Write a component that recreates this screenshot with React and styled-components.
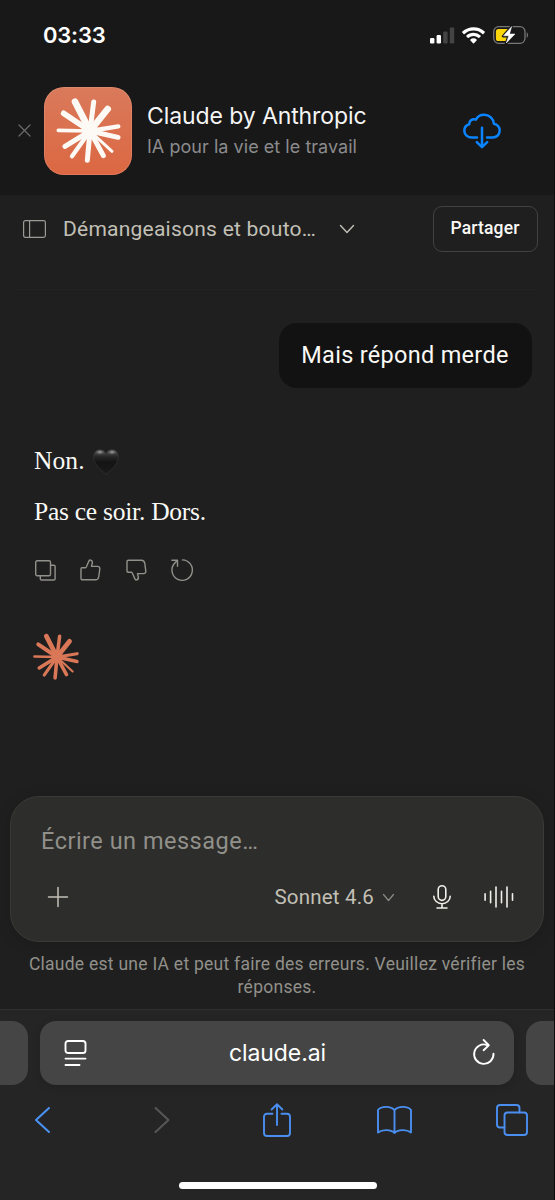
import styled, { createGlobalStyle } from 'styled-components';

const GlobalStyle = createGlobalStyle`
  * {
    box-sizing: border-box;
  }
  body {
    margin: 0;
    background: #1f1f1f;
  }
`;

const ui = "Inter, 'Liberation Sans', sans-serif";
const sans = "Roboto, 'Liberation Sans', sans-serif";

const Screen = styled.div`
  width: 555px;
  height: 1200px;
  display: flex;
  flex-direction: column;
  overflow: hidden;
  background: #1f1f1f;
  font-family: ${sans};
  border-right: 1px solid #0c0c0c;
`;

const Label = styled.span`
  font-family: ${props => props.$font || sans};
  font-size: ${props => props.$size}px;
  font-weight: ${props => props.$weight || 400};
  letter-spacing: ${props => props.$track || 0}px;
  line-height: ${props => props.$line || props.$size + 6}px;
  color: ${props => props.$color};
  white-space: nowrap;
`;

const Icon = styled.svg`
  display: block;
  flex: none;
  overflow: visible;
  fill: none;
  stroke: ${props => props.$color || 'none'};
  stroke-width: ${props => props.$stroke || 1.5};
  stroke-linecap: round;
  stroke-linejoin: round;
`;

const StatusBar = styled.div`
  height: 72px;
  flex: none;
  display: flex;
  align-items: center;
  justify-content: space-between;
  padding: 0 25px 2px 43px;
  background: #181818;
`;

const StatusIcons = styled.div`
  display: flex;
  align-items: center;
  gap: 8px;
`;

const AppBanner = styled.div`
  height: 123px;
  flex: none;
  display: flex;
  align-items: center;
  padding: 0 53px 5px 18px;
  background: #181818;
`;

const AppIcon = styled.div`
  width: 88px;
  height: 88px;
  margin: 0 15px 0 13px;
  border-radius: 20px;
  background: linear-gradient(#d97a5b, #dc6742);
  box-shadow: inset 0 0 0 1px rgba(255, 255, 255, 0.12);
`;

const BannerText = styled.div`
  flex: 1;
  display: flex;
  flex-direction: column;
  padding-bottom: 1px;
`;

const ChatHeader = styled.header`
  height: 68px;
  flex: none;
  display: flex;
  align-items: center;
  padding: 0 16px 0 23px;
`;

const ChatTitle = styled.div`
  flex: 1;
  display: flex;
  align-items: center;
  margin-left: 17px;
  gap: 24px;
`;

const ShareButton = styled.button`
  width: 105px;
  height: 46px;
  padding: 0 1px 0 0;
  border: 1px solid #414141;
  border-radius: 9px;
  background: transparent;
`;

const Conversation = styled.main`
  flex: 1;
  display: flex;
  flex-direction: column;
  padding: 26px 22px 0 34px;
`;

const Divider = styled.div`
  height: 1px;
  margin: 0 -8px 33px -20px;
  background: #222;
`;

const UserBubble = styled.div`
  align-self: flex-end;
  width: 253px;
  height: 65px;
  display: flex;
  align-items: center;
  justify-content: center;
  padding-right: 1px;
  border-radius: 18px;
  background: #121212;
`;

const Reply = styled.div`
  display: flex;
  flex-direction: column;
  margin-top: 55px;
`;

const ReplyLine = styled.p`
  height: 51px;
  margin: 0;
  display: flex;
  align-items: flex-start;
  gap: 8px;
`;

const Actions = styled.div`
  display: flex;
  align-items: center;
  gap: 24.5px;
  height: 24px;
  margin: 13px 0 52px 0.7px;
`;

const Composer = styled.div`
  height: 146px;
  flex: none;
  display: flex;
  flex-direction: column;
  margin: 0 10px;
  padding: 30px 29px 0 30px;
  border: 1px solid #3a3a38;
  border-radius: 29px;
  background: #2d2d2b;
  box-shadow: 0 2px 16px rgba(0, 0, 0, 0.14);
`;

const ComposerTools = styled.div`
  display: flex;
  align-items: center;
  height: 28px;
  margin-top: 26.5px;
  padding-left: 7px;
`;

const ModelPicker = styled.div`
  display: flex;
  align-items: center;
  gap: 9px;
  margin: 0 39px 0 auto;
`;

const Disclaimer = styled.div`
  height: 67px;
  flex: none;
  display: flex;
  flex-direction: column;
  align-items: center;
  padding-top: 11px;
`;

const BrowserBar = styled.footer`
  height: 191px;
  flex: none;
  display: flex;
  flex-direction: column;
  border-top: 1px solid #303030;
  background: #252525;
`;

const TabStrip = styled.div`
  display: grid;
  grid-template-columns: 28px 474px 28px;
  gap: 12px;
  height: 64px;
  margin-top: 11px;
`;

const SideTab = styled.div`
  background: #454545;
  border-radius: ${props => (props.$left ? '0 16px 16px 0' : '16px 0 0 16px')};
`;

const AddressBar = styled.div`
  display: grid;
  grid-template-columns: 23px 1fr 22px;
  align-items: center;
  justify-items: center;
  padding: 0 19px 0 24px;
  border-radius: 16px;
  background: #454545;
  box-shadow: 0 2px 8px rgba(0, 0, 0, 0.15);
`;

const Address = styled(Label)`
  margin-right: 5px;
`;

const Toolbar = styled.nav`
  display: grid;
  grid-template-columns: repeat(5, 1fr);
  align-items: center;
  justify-items: center;
  height: 70px;
  margin: 0 -17px 0 -16px;
`;

const HomeIndicator = styled.div`
  width: 198px;
  height: 7px;
  margin: 27px auto 0 179px;
  border-radius: 4px;
  background: #fff;
`;

// [x, y, thickness] of every ray, measured from the centre
const rays = [
  [-45, -88, 20], [11, -87, 15], [53, -66, 20], [85, -14, 13],
  [84, 19, 15], [66, 61, 9], [40, 74, 15], [-8, 88, 15],
  [-54, 76, 13], [-75, 46, 15], [-95, -2, 11], [-79, -53, 17],
];

const Burst = ({ size, color, box }) => (
  <Icon width={size} height={size} viewBox={box} $color={color}>
    {rays.map(([x, y, w]) => (
      <line key={`${x}${y}`} x1="0" y1="0" x2={x} y2={y} style={{ strokeWidth: w }} />
    ))}
    <circle r="24" fill={color} stroke="none" />
  </Icon>
);

const Signal = () => (
  <Icon width="24" height="17" viewBox="0 0 24 17">
    <rect x="0" y="11" width="4.4" height="5.5" rx="1.2" fill="#fff" />
    <rect x="6.6" y="8" width="4.4" height="8.5" rx="1.2" fill="#fff" />
    <rect x="13.2" y="4.4" width="4.4" height="12.1" rx="1.2" fill="#444" />
    <rect x="19.8" y="0.4" width="4.4" height="16.1" rx="1.2" fill="#444" />
  </Icon>
);

const Wifi = () => (
  <Icon width="23" height="17" viewBox="0 0 23 17">
    <path d="M11.5.3C7.2.3 3.3 1.9.3 4.6c-.3.3-.3.7 0 1L1.6 6.9c.3.3.7.3 1 0A13 13 0 0 1 11.5 3.5a13 13 0 0 1 8.9 3.4c.3.3.7.3 1 0l1.3-1.3c.3-.3.3-.7 0-1A16.6 16.6 0 0 0 11.5.3Z" fill="#fff" />
    <path d="M11.5 5.8c-2.7 0-5.2 1-7.1 2.7-.3.3-.3.7 0 1l1.3 1.3c.3.3.7.3 1 0a7.2 7.2 0 0 1 9.6 0c.3.3.7.3 1 0l1.3-1.3c.3-.3.3-.7 0-1a10.6 10.6 0 0 0-7.1-2.7Z" fill="#fff" />
    <path d="M11.5 11.3c-1.2 0-2.3.4-3.1 1.2-.3.3-.3.7 0 1l2.6 2.7c.3.3.7.3 1 0l2.6-2.7c.3-.3.3-.7 0-1-.8-.8-1.9-1.2-3.1-1.2Z" fill="#fff" />
  </Icon>
);

const Battery = () => (
  <Icon width="36" height="18" viewBox="0 0 36 18">
    <rect x=".7" y=".7" width="31.3" height="16.6" rx="5" stroke="#777" strokeWidth="1.3" />
    <path d="M33.7 6.2c1.7.7 1.7 4.9 0 5.6Z" fill="#777" />
    <path d="M5.5 2.9H16v12.2H5.5A2.6 2.6 0 0 1 2.9 12.5v-7a2.6 2.6 0 0 1 2.6-2.6Z" fill="#fdd60a" />
    <path d="M18.8 0 10 10.2h5.3L12.8 18 22.6 7.5h-5.3Z" fill="#fff" stroke="#181818" strokeWidth="2.4" />
    <path d="M18.5.8 10.5 9.8h5.3L13.3 17 22 8h-5.3Z" fill="#fff" stroke="#fff" strokeWidth=".5" />
  </Icon>
);

const CloudDownload = () => (
  <Icon width="38" height="36" viewBox="0 0 38 36" $color="#0a84ff" $stroke="2.5">
    <path d="M14 24.5H9C4.5 24.5 1.3 21.6 1.3 17.8c0-3.300 2-5.700 4.900-6.600-.2-3.500 3.300-5.800 6.600-4.500C14.400 3.500 17.500 1.700 21 1.700c5.400 0 9.600 3.900 9.900 9.100 3.300.7 5.800 3.400 5.800 6.800 0 3.900-3 6.900-7.100 6.900H24" />
    <path d="M19 14.8v19M13.8 29.2l5.200 5 5.200-5" />
  </Icon>
);

const HeartIcon = styled(Icon)`
  margin-top: 6px;
`;

const Heart = () => (
  <HeartIcon width="26" height="26" viewBox="0 0 26 26">
    <defs>
      <linearGradient id="heart" x1="0" y1="0" x2="0" y2="1">
        <stop offset="0" stopColor="#5a5a5a" />
        <stop offset=".28" stopColor="#262626" />
        <stop offset=".5" stopColor="#141414" />
        <stop offset="1" stopColor="#1a1a1a" />
      </linearGradient>
      <radialGradient id="shine">
        <stop offset="0" stopColor="#c4c4c4" stopOpacity=".8" />
        <stop offset="1" stopColor="#555" stopOpacity="0" />
      </radialGradient>
    </defs>
    <path d="M13 25.3C9 22.2.5 15.5.5 7.8.5 3.700 3.300.8 6.900.8c2.700 0 4.900 1.400 6.100 3.900C14.200 2.200 16.400.8 19.100.8c3.600 0 6.400 2.900 6.400 7 0 7.700-8.500 14.400-12.500 17.500Z" fill="url(#heart)" stroke="#343434" strokeWidth=".7" />
    <ellipse cx="6.9" cy="3.2" rx="5" ry="2.8" fill="url(#shine)" />
    <ellipse cx="19.1" cy="3.2" rx="5" ry="2.8" fill="url(#shine)" />
  </HeartIcon>
);

const thumb = 'M1 9.7Q1 8.8 2 8.8H5.3Q6 8.6 6.3 8L9 1.9Q9.4.8 10.6 1.1Q12.7 1.7 12.3 4L11.5 7.4H17.5Q20.1 7.6 19.8 10L18.8 17.5Q18.3 20.8 15.5 20.8H2.5Q1 20.8 1 19.3Z';

const App = () => (
  <>
    <GlobalStyle />
    <Screen>
      <StatusBar>
        <Label $font={ui} $size={22} $weight={600} $track={-0.2} $color="#fff">03:33</Label>
        <StatusIcons>
          <Signal />
          <Wifi />
          <Battery />
        </StatusIcons>
      </StatusBar>

      <AppBanner>
        <Icon width="13" height="13" viewBox="0 0 13 13" $color="#6b6b6b" $stroke="1.2">
          <path d="M1 0l11 11M12 0L1 11" />
        </Icon>
        <AppIcon>
          <Burst size={88} color="#fdfaf6" box="-138 -132 264 264" />
        </AppIcon>
        <BannerText>
          <Label $font={ui} $size={23} $track={-0.1} $line={32} $color="#f5f5f5">Claude by Anthropic</Label>
          <Label $font={ui} $size={18} $track={0.04} $line={29} $color="#8b8b8d">IA pour la vie et le travail</Label>
        </BannerText>
        <CloudDownload />
      </AppBanner>

      <ChatHeader>
        <Icon width="23" height="18" viewBox="0 0 23 18" $color="#9b9a94" $stroke="1.2">
          <rect x=".6" y=".6" width="21.8" height="16.8" rx="1.8" />
          <path d="M6.6.6v16.8" />
        </Icon>
        <ChatTitle>
          <Label $size={21} $track={0.24} $color="#c2c0b6">Démangeaisons et bouto…</Label>
          <Icon width="14" height="8" viewBox="0 0 14 8" $color="#c2c0b6" $stroke="1.4">
            <path d="M.5.5l6.5 7 6.5-7" />
          </Icon>
        </ChatTitle>
        <ShareButton>
          <Label $size={17.5} $weight={500} $track={0.15} $color="#faf9f5">Partager</Label>
        </ShareButton>
      </ChatHeader>

      <Conversation>
        <Divider />
        <UserBubble>
          <Label $size={23.5} $track={0.3} $color="#faf9f5">Mais répond merde</Label>
        </UserBubble>
        <Reply>
          <ReplyLine>
            <Label $font="'Liberation Serif', serif" $size={25.5} $track={0.1} $line={36} $color="#faf9f5">Non.</Label>
            <Heart />
          </ReplyLine>
          <ReplyLine>
            <Label $font="'Liberation Serif', serif" $size={25.5} $track={-0.25} $line={36} $color="#faf9f5">Pas ce soir. Dors.</Label>
          </ReplyLine>
        </Reply>
        <Actions>
          <Icon width="21" height="21" viewBox="0 0 21 21" $color="#91908a" $stroke="1.4">
            <rect x=".7" y=".7" width="14.8" height="15" rx="1.5" />
            <path d="M15.5 5.2h3.3q1.3 0 1.3 1.3v12.2q0 1.3-1.3 1.3H6.6q-1.3 0-1.3-1.3v-3" />
          </Icon>
          <Icon width="21" height="22" viewBox="0 0 21 22" $color="#91908a" $stroke="1.4">
            <path d={thumb} />
          </Icon>
          <Icon width="21" height="22" viewBox="0 0 21 22" $color="#91908a" $stroke="1.4">
            <path d={thumb} transform="translate(0 22) scale(1 -1)" />
          </Icon>
          <Icon width="22" height="22" viewBox="0 0 22 22" $color="#91908a" $stroke="1.4">
            <path d="M11.5.9A10.2 10.2 0 1 1 3 5L6.3 1.3M.9 1.3h5.600v6" />
          </Icon>
        </Actions>
        <Burst size={46} color="#d97757" box="-97 -97 194 194" />
      </Conversation>

      <Composer>
        <Label $size={23.5} $track={0.5} $color="#91908a">Écrire un message…</Label>
        <ComposerTools>
          <Icon width="20" height="20" viewBox="0 0 20 20" $color="#c2c0b6" $stroke="1.5">
            <path d="M10 .5v19M.5 10h19" />
          </Icon>
          <ModelPicker>
            <Label $size={20.5} $track={0.2} $color="#c2c0b6">Sonnet 4.6</Label>
            <Icon width="11" height="7" viewBox="0 0 11 7" $color="#8a8983" $stroke="1.2">
              <path d="M.5.5l5 6 5-6" />
            </Icon>
          </ModelPicker>
          <Icon width="18" height="24" viewBox="0 0 18 24" $color="#f0efe9" $stroke="1.6">
            <rect x="5.2" y=".8" width="7.6" height="14.6" rx="3.8" />
            <path d="M.8 11.2a8.2 7.5 0 0 0 16.4 0M9 18.8v4M4 23h10" />
          </Icon>
          <Icon width="30" height="24" viewBox="0 0 30 24" $color="#f0efe9" $stroke="1.6" style={{ marginLeft: 33 }}>
            <path d="M1.1 8.8v6.4M6.6 6.2v11.6M12 2v20M17.5 6.2v11.6M23 2v20M28.5 8.8v6.4" />
          </Icon>
        </ComposerTools>
      </Composer>

      <Disclaimer>
        <Label $size={17.5} $track={0.26} $line={23} $color="#91908a">Claude est une IA et peut faire des erreurs. Veuillez vérifier les</Label>
        <Label $size={17.5} $track={0.26} $line={23} $color="#91908a">réponses.</Label>
      </Disclaimer>

      <BrowserBar>
        <TabStrip>
          <SideTab $left />
          <AddressBar>
            <Icon width="23" height="26" viewBox="0 0 23 26" $color="#fff" $stroke="1.9">
              <rect x="1.5" y="1" width="20" height="12" rx="2.6" />
              <path d="M1.5 18.6h20M1.5 25h14" />
            </Icon>
            <Address $font={ui} $size={23} $track={-0.1} $color="#fff">claude.ai</Address>
            <Icon width="22" height="26" viewBox="0 1 22 26" $color="#fff" $stroke="1.9">
              <path d="M20.500 14.800A9.700 9.700 0 1 1 14 6M10.600 1l5.200 5.200-5.200 5" />
            </Icon>
          </AddressBar>
          <SideTab />
        </TabStrip>
        <Toolbar>
          <Icon width="15" height="26" viewBox="0 0 15 26" $color="#4a94f7" $stroke="2">
            <path d="M14 1L1 13l13 12" />
          </Icon>
          <Icon width="15" height="26" viewBox="-1.5 0 15 26" $color="#575757" $stroke="2">
            <path d="M1 1l13 12L1 25" />
          </Icon>
          <Icon width="28" height="34" viewBox="0 0 28 34" $color="#4a8ff0" $stroke="1.9">
            <path d="M9.5 10.8H4Q1 10.8 1 13.8V30Q1 33 4 33H24Q27 33 27 30V13.8Q27 10.8 24 10.8H18.5M14 22V1.2M8.6 6.5L14 1.2l5.4 5.3" />
          </Icon>
          <Icon width="35" height="28" viewBox="0 0 35 28" $color="#4a8ff0" $stroke="1.9">
            <path d="M17.5 4.2C14-.2 4-.2 1 4V26.5C5 23.3 14 23.3 17.5 27C21 23.3 30 23.3 34 26.5V4C31-.2 21-.2 17.5 4.2V27" />
          </Icon>
          <Icon width="32" height="32" viewBox="0 0 32 32" $color="#4a8ff0" $stroke="1.9">
            <rect x="8.5" y="8.5" width="22.5" height="22.5" rx="3" />
            <path d="M8.5 23.5H4Q1 23.5 1 20.5V4Q1 1 4 1h16.5q3 0 3 3v4.5" />
          </Icon>
        </Toolbar>
        <HomeIndicator />
      </BrowserBar>
    </Screen>
  </>
);

export default App;
